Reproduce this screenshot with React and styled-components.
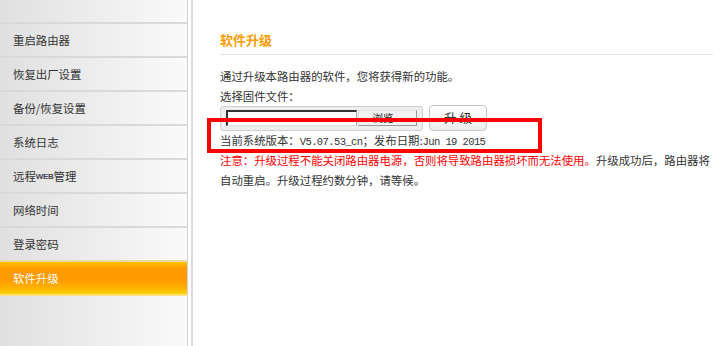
import React from 'react';
import styled, { createGlobalStyle } from 'styled-components';

const GlobalStyle = createGlobalStyle`
  html, body {
    margin: 0;
    padding: 0;
    background: #fff;
  }
  body {
    font-family: "Noto Sans CJK SC", "Liberation Sans", sans-serif;
    color: #333;
  }
`;

const menu = [
  '重启路由器',
  '恢复出厂设置',
  '备份/恢复设置',
  '系统日志',
  'REMOTE',
  '网络时间',
  '登录密码',
  '软件升级',
];

const Page = styled.div`
  display: flex;
  width: 720px;
  height: 346px;
  overflow: hidden;
`;

const Sidebar = styled.nav`
  width: 187px;
  flex-shrink: 0;
  border-right: 1px solid #d2d2d2;
  background: linear-gradient(to right, #e0e0e0, #fafafa);
  display: flex;
  flex-direction: column;
`;

const TopStub = styled.div`
  height: 22px;
  border-bottom: 2px solid #d9d9d9;
`;

const MenuItem = styled.div`
  height: 32px;
  display: flex;
  align-items: center;
  padding-left: 13px;
  font-size: 11.4px;
  color: ${(p) => (p.$active ? '#fff' : '#333')};
  border-bottom: 2px solid ${(p) => (p.$active ? '#ffe27a' : '#d9d9d9')};
  background: ${(p) =>
    p.$active
      ? 'linear-gradient(to bottom, #ffc400 0%, #ff9c00 18%, #ff9900 55%, #ffb300 82%, #ffd000 100%)'
      : 'transparent'};
  margin-top: ${(p) => (p.$active ? '-2px' : '0')};
  border-top: ${(p) => (p.$active ? '2px solid #e8d9a8' : 'none')};
`;

const Web = styled.span`
  font-family: "Liberation Sans", sans-serif;
  font-weight: bold;
  font-size: 8px;
  letter-spacing: -0.3px;
  color: #445;
`;

const Main = styled.main`
  position: relative;
  flex: 1;
  margin-left: 3px;
  border-left: 2px solid #dcdcdc;
  padding: 30px 7px 0 27px;
  font-size: 11.4px;
  line-height: 20px;
`;

const Title = styled.h2`
  margin: 0;
  font-size: 13px;
  line-height: 20px;
  font-weight: bold;
  color: #ff9c00;
  padding-bottom: 4px;
  border-bottom: 1px solid #e2e2e2;
  margin-bottom: 11px;
`;

const Line = styled.div`
  line-height: 20px;
  color: #333;
`;

const Warn = styled.span`
  color: #ff0000;
`;

const UploadRow = styled.div`
  display: flex;
  align-items: center;
  height: 24px;
`;

const FileBox = styled.div`
  width: 203px;
  height: 25px;
  box-sizing: border-box;
  display: flex;
  align-items: center;
  padding-left: 5px;
  background: #eeeeee;
  border: 1px solid #d0d0d0;
  border-radius: 3px;
`;

const FileField = styled.div`
  width: 131px;
  height: 16px;
  box-sizing: border-box;
  background: #fff;
  border-top: 2px solid #333;
  border-left: 2px solid #333;
  border-right: 1px solid #aaa;
  border-bottom: 1px solid #ddd;
`;

const BrowseButton = styled.span`
  width: 59px;
  height: 16px;
  margin-left: 1px;
  box-sizing: border-box;
  display: flex;
  align-items: center;
  justify-content: center;
  font-size: 10.5px;
  line-height: 14px;
  color: #222;
  background: #f2f2f2;
  border: 1px solid #999;
  border-top-color: #ddd;
  border-left-color: #ddd;
`;

const UpgradeButton = styled.button`
  width: 58px;
  height: 26px;
  margin-left: 6px;
  padding: 0;
  font-family: inherit;
  font-size: 12.5px;
  line-height: 1;
  color: #333;
  background: linear-gradient(to bottom, #ffffff, #ececec);
  border: 1px solid #c8c8c8;
  border-radius: 4px;
`;

const Mono = styled.span`
  font-family: "Liberation Mono", monospace;
  font-size: 10.5px;
  letter-spacing: -0.6px;
  line-height: 1;
  color: #333;
`;

const Highlight = styled.div`
  position: absolute;
  left: 14px;
  top: 118px;
  width: 335px;
  height: 35px;
  box-sizing: border-box;
  border: 4px solid #ff0000;
  pointer-events: none;
`;

export default function App() {
  return (
    <>
      <GlobalStyle />
      <Page>
        <Sidebar>
          <TopStub />
          {menu.map((name, i) => (
            <MenuItem key={name} $active={i === menu.length - 1}>
              {name === 'REMOTE' ? (
                <>
                  远程<Web>WEB</Web>管理
                </>
              ) : (
                name
              )}
            </MenuItem>
          ))}
        </Sidebar>
        <Main>
          <Title>软件升级</Title>
          <Line>通过升级本路由器的软件，您将获得新的功能。</Line>
          <Line>选择固件文件：</Line>
          <UploadRow>
            <FileBox>
              <FileField />
              <BrowseButton>浏览...</BrowseButton>
            </FileBox>
            <UpgradeButton>升 级</UpgradeButton>
          </UploadRow>
          <Line>
            当前系统版本：<Mono>V5.07.53_cn</Mono>；发布日期:<Mono>Jun 19 2015</Mono>
          </Line>
          <Line>
            <Warn>注意：升级过程不能关闭路由器电源，否则将导致路由器损坏而无法使用。</Warn>
            升级成功后，路由器将自动重启。升级过程约数分钟，请等候。
          </Line>
          <Highlight />
        </Main>
      </Page>
    </>
  );
}
